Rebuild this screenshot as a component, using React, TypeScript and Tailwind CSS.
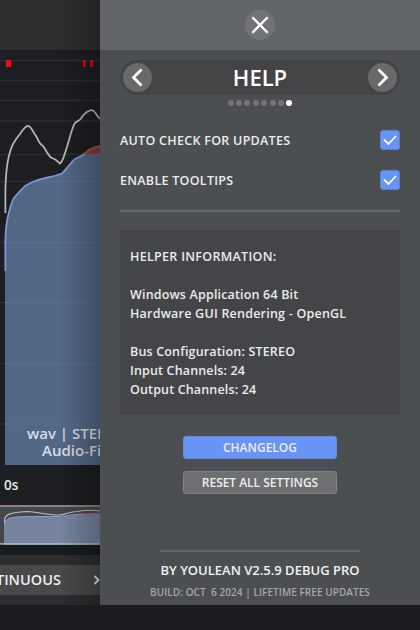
import React from "react";

const gridLines = [60.5, 80.5, 100.5, 121, 154.5, 181.5, 242.5, 302.5, 363.5, 424];

const levelCurve =
  "M5.3 271V240C5.6 228 7 219 9 212C10 208 12 201 14 198C16 195 21 190 25 186C28 184 32 182 35 181C41 179 50 177 55 175.7L62 173.5C65 171 72 161 75 159C77 158 80 157 82 155.5L85 153.7";

function LoudnessGraph() {
  return (
    <svg className="block h-[415px] w-[100px]" viewBox="0 50 100 415" fill="none">
      <path d={levelCurve + "H100V465H5V271Z"} fill="#536786" />
      <path d="M83 154.5L89 150C92 148 95 146 100 146V154Z" fill="#78403c" />
      {gridLines.map((y) => (
        <path key={y} d={`M0 ${y}H100`} stroke="#9aa0aa" strokeOpacity=".12" strokeWidth="1.3" />
      ))}
      <path d={levelCurve} stroke="#7c9ad6" strokeWidth="1.7" />
      <path d="M83.500 154.200L89 150C92 148 95 146.500 100 146.200" stroke="#b4524a" strokeWidth="1.700" />
      <path
        d="M5.400 213V190C5.700 175 8 157 11 149C13 142 17 138 20 134C22 131 25 125.800 28 125.800C31 126 33 132 36 136C38 139 39 144 43 146C46 150 49 157 52 158C56 159 57 161 60 163.500C63 161 64 156 66 150C69 141 72 127 75 123C77 121 79 121 81 118.500C83 115 86 112 90 110.500C94 109 95 113 100 119"
        stroke="#b6b6b6"
        strokeWidth="1.8"
      />
      <path d="M6 60H11V67H6Z" fill="#ff0808" />
      <path d="M83 60H85.700V67H83ZM90 60H93V67H90Z" fill="#e00808" />
    </svg>
  );
}

function Overview() {
  return (
    <svg className="block h-10 w-[100px]" viewBox="0 505 100 40" fill="none">
      <path d="M0 505H100V545H0Z" fill="#46474a" />
      <path d="M4 545V525C5 519 9 517.500 17 517C32 516 55 517 65 516C72 514.500 82 514 100 513V545Z" fill="#75859f" />
      <path d="M4.500 525C5 519 9 517.500 17 517C32 516 55 517 65 516C72 514.500 76 514.500 84 514" stroke="#8aa2d4" />
      <path d="M82 514L100 513" stroke="#a4605c" />
      <path d="M4.500 522C4 514 10 512.500 27 511.500C38 512 49 515.500 60 515C67 514 70 511.500 77 511.500C86 510 92 509.500 100 511" stroke="#c0c0be" strokeWidth="1.100" />
      <path d="M0 506H100" stroke="#98989a" strokeWidth="1.300" />
      <path d="M5 505.500H10M82 505.500H85M89 505.500H92" stroke="#d95550" />
      <path d="M0 543.800H100" stroke="#b7bcc6" strokeWidth="1.300" />
    </svg>
  );
}

function MeterBackground() {
  return (
    <div className="relative flex w-[100px] shrink-0 flex-col overflow-hidden bg-[#1d1e21]">
      <div className="h-[50px] bg-[#2d2e2f]" />
      <LoudnessGraph />
      <div className="flex h-10 items-center pl-1 text-[13.5px] font-semibold text-[#e8e8e8]">0s</div>
      <Overview />
      <div className="h-2.5 bg-[#1a1b1f]" />
      <div className="flex h-[50px] flex-col justify-center bg-[#2c2d2e]">
        <div className="relative flex h-[30px] items-center bg-[#48494b]">
          <span className="-ml-[4px] pt-px text-[14.5px] font-semibold leading-none text-[#eeeeee]">TINUOUS</span>
          <svg className="ml-auto h-3 w-[7px]" viewBox="0 0 7 12" fill="none">
            <path d="M1.500 2L5.500 6L1.500 10" stroke="#dedede" strokeWidth="2" />
          </svg>
        </div>
      </div>
      <div className="absolute left-[27px] top-[425px] whitespace-nowrap text-[15px] font-semibold leading-[17px] text-[#d9dde4]">
        <div>wav | STEREO</div>
        <div className="pl-[15px]">Audio-File</div>
      </div>
      <div className="absolute inset-y-0 right-0 w-10 bg-linear-to-r from-black/0 to-black/25" />
    </div>
  );
}

function RoundButton({ label, d }: { label: string; d: string }) {
  return (
    <button aria-label={label} className="flex size-[29px] items-center justify-center rounded-full bg-[#69696c]">
      <svg className="size-[29px]" viewBox="0 0 29 29" fill="none">
        <path d={d} stroke="#fff" strokeWidth="2.800" />
      </svg>
    </button>
  );
}

function CheckRow({ label }: { label: string }) {
  return (
    <label className="flex h-10 items-center justify-between">
      <span className="pt-0.5 text-[12.5px] font-semibold tracking-[0.28px] text-[#ececec]">{label}</span>
      <span className="size-5 rounded-[3px] border border-[#5c80ca] bg-[#6794f5]">
        <svg className="size-[18px]" viewBox="0 0 18 18" fill="none">
          <path d="M3 8.500L7.500 13L15 5" stroke="#fff" strokeWidth="1.800" />
        </svg>
      </span>
    </label>
  );
}

function HelpPanel() {
  return (
    <div className="flex w-[320px] flex-col bg-[#4b4f51]">
      <div className="flex h-[50px] shrink-0 items-center justify-center bg-[#626668]">
        <button aria-label="Close" className="size-[30px] rounded-full bg-[#717477]">
          <svg className="size-[30px]" viewBox="0 0 30 30" fill="none">
            <path d="M7.300 7.300L22.700 22.700M22.700 7.300L7.300 22.700" stroke="#fff" strokeWidth="2.300" />
          </svg>
        </button>
      </div>
      <div className="mx-5 mt-2.5 flex h-[35px] shrink-0 items-center justify-between rounded-full bg-[#444447] px-[3px]">
        <RoundButton label="Previous" d="M18.500 6.500L10.500 14.500L18.500 22.500" />
        <h1 className="pb-[2px] text-[22px] font-semibold leading-none text-white">HELP</h1>
        <RoundButton label="Next" d="M10.500 6.500L18.500 14.500L10.500 22.500" />
      </div>
      <div className="mt-1 flex h-[7px] shrink-0 items-center justify-center gap-[2.350px]">
        {[0, 1, 2, 3, 4, 5, 6].map((page) => (
          <span key={page} className="size-[6px] rounded-full bg-[#727477]" />
        ))}
        <span className="size-[6px] rounded-full bg-white" />
      </div>
      <div className="mx-5 mt-[14px]">
        <CheckRow label="AUTO CHECK FOR UPDATES" />
        <CheckRow label="ENABLE TOOLTIPS" />
      </div>
      <div className="mx-5 mt-[10px] h-0.5 bg-[#65686b]" />
      <div className="mx-5 mt-[18px] h-[185px] rounded-[2px] bg-[#444548] px-2.5 pt-[17px] text-[12.5px] font-semibold leading-[19px] tracking-[0.2px] text-[#ebebeb]">
        <p className="tracking-[0.3px]">HELPER INFORMATION:</p>
        <p className="mt-[19px] tracking-[0.17px]">Windows Application 64 Bit</p>
        <p className="tracking-[0.22px]">Hardware GUI Rendering - OpenGL</p>
        <p className="mt-[19px] tracking-[0.17px]">Bus Configuration: STEREO</p>
        <p className="tracking-[0.15px]">Input Channels: 24</p>
        <p className="tracking-[0.15px]">Output Channels: 24</p>
      </div>
      <div className="mt-[21px] flex flex-col items-center gap-3 text-[12px] font-semibold text-[#eeeeee]">
        <button className="h-[23px] w-[154px] rounded-[3px] border border-[#6089df] bg-[#6794f5]">CHANGELOG</button>
        <button className="h-[23px] w-[154px] rounded-[3px] border border-[#808183] bg-[#6e6f71] tracking-[-0.03px]">RESET ALL SETTINGS</button>
      </div>
      <div className="mx-auto mt-[56px] h-0.5 w-[200px] bg-[#626568]" />
      <div className="mt-[8px] text-center text-[13px] font-semibold leading-5 text-[#f2f2f2]">BY YOULEAN V2.5.9 DEBUG PRO</div>
      <div className="mt-[5px] whitespace-pre text-center text-[10px] font-semibold leading-[14px] tracking-[0.06px] text-[#a5a7a8]">{"BUILD: OCT  6 2024 | LIFETIME FREE UPDATES"}</div>
    </div>
  );
}

export default function App() {
  return (
    <div className="flex h-[630px] w-[420px] flex-col overflow-hidden bg-[#1b1c20] font-['Open_Sans','Noto_Sans',sans-serif]">
      <div className="flex h-[605px]">
        <MeterBackground />
        <HelpPanel />
      </div>
    </div>
  );
}
